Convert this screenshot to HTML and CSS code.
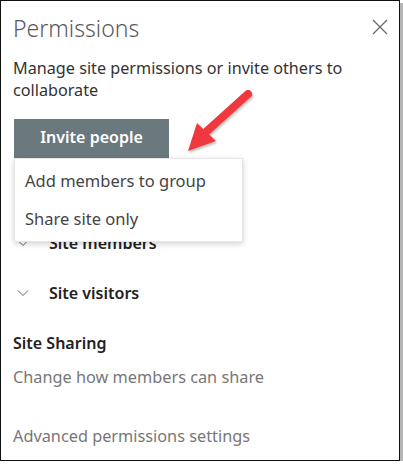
FILE: index.html
```html
<!DOCTYPE html>
<html lang="en">
<head>
    <meta charset="UTF-8">
    <meta name="viewport" content="width=device-width, initial-scale=1.0">
    <title>Permissions</title>
    <link rel="stylesheet" href="styles.css">
</head>
<body>
    <div class="panel">
        <header class="panel-head">
            <h1>Permissions</h1>
            <button class="close" aria-label="Close">
                <svg width="16" height="16" viewBox="0 0 16 16"><path d="M1 1L15 15M15 1L1 15" stroke="#666" stroke-width="1.2" fill="none"/></svg>
            </button>
        </header>
        <p class="intro">Manage site permissions or invite others to collaborate</p>

        <div class="invite">
            <button class="invite-btn">Invite people</button>
            <ul class="menu">
                <li>Add members to group</li>
                <li>Share site only</li>
            </ul>
            <svg class="arrow" width="80" height="80" viewBox="0 0 80 80">
                <path d="M63 5L22 42" stroke="#f0393f" stroke-width="8" stroke-linecap="round" fill="none"/>
                <path d="M3 62L12 34L31 52Z" fill="#f0393f"/>
            </svg>
        </div>

        <div class="group first">
            <svg class="chev" width="12" height="8" viewBox="0 0 12 8"><path d="M1 1.5L6 6.5L11 1.5" stroke="#666" stroke-width="1" fill="none"/></svg>
            <span>Site members</span>
        </div>
        <div class="group">
            <svg class="chev" width="12" height="8" viewBox="0 0 12 8"><path d="M1 1.5L6 6.5L11 1.5" stroke="#666" stroke-width="1" fill="none"/></svg>
            <span>Site visitors</span>
        </div>

        <h2>Site Sharing</h2>
        <a class="link">Change how members can share</a>
        <a class="link advanced">Advanced permissions settings</a>
    </div>
</body>
</html>
```

FILE: styles.css
```css
body {
    margin: 0;
    background: white;
    font-family: "Noto Sans", "Open Sans", sans-serif;
}
.panel {
    width: 398px;
    height: 459px;
    border: 1px solid #111;
    box-shadow: 3px 3px 0 #b5b5b5;
    background: white;
    overflow: hidden;
}
.panel-head {
    display: flex;
    justify-content: space-between;
    align-items: flex-start;
    padding: 12px 11px 0 12px;
}
.panel-head h1 {
    margin: 0;
    font-size: 23px;
    font-weight: 300;
    color: #5a5a5a;
    line-height: 30px;
}
.close {
    border: none;
    background: none;
    padding: 0;
    margin-top: 6px;
    width: 16px;
    height: 16px;
}
.intro {
    margin: 14px 40px 0 12px;
    font-size: 16.2px;
    line-height: 22px;
    color: #333;
}
.invite {
    position: relative;
    margin: 18px 0 0 13px;
}
.invite-btn {
    display: block;
    width: 155px;
    height: 39px;
    border: none;
    background: #69797e;
    color: white;
    font-family: inherit;
    font-size: 16px;
    font-weight: 600;
    padding: 0 0 4px;
}
.menu {
    position: absolute;
    left: 0;
    top: 39px;
    width: 227px;
    margin: 0;
    padding: 3px 0;
    list-style: none;
    background: white;
    border: 1px solid #e6e6e6;
    box-shadow: 0 2px 6px rgba(0, 0, 0, 0.18);
    z-index: 2;
}
.menu li {
    padding: 0 10px;
    height: 38px;
    line-height: 38px;
    font-size: 16.5px;
    color: #444;
}
.arrow {
    position: absolute;
    left: 171px;
    top: -30px;
    filter: drop-shadow(1px 2px 1px rgba(0, 0, 0, 0.25));
}
.group {
    display: flex;
    align-items: center;
    gap: 20px;
    margin-left: 16px;
    height: 50px;
    font-size: 16px;
    font-weight: 600;
    color: #222;
}
.group.first {
    margin-top: 60px;
}
h2 {
    margin: 14px 0 0 12px;
    font-size: 16px;
    line-height: 22px;
    font-weight: 600;
    color: #222;
}
.link {
    display: block;
    margin: 12px 0 0 12px;
    font-size: 16.3px;
    line-height: 22px;
    color: #777;
}
.link.advanced {
    margin-top: 37px;
}
```
